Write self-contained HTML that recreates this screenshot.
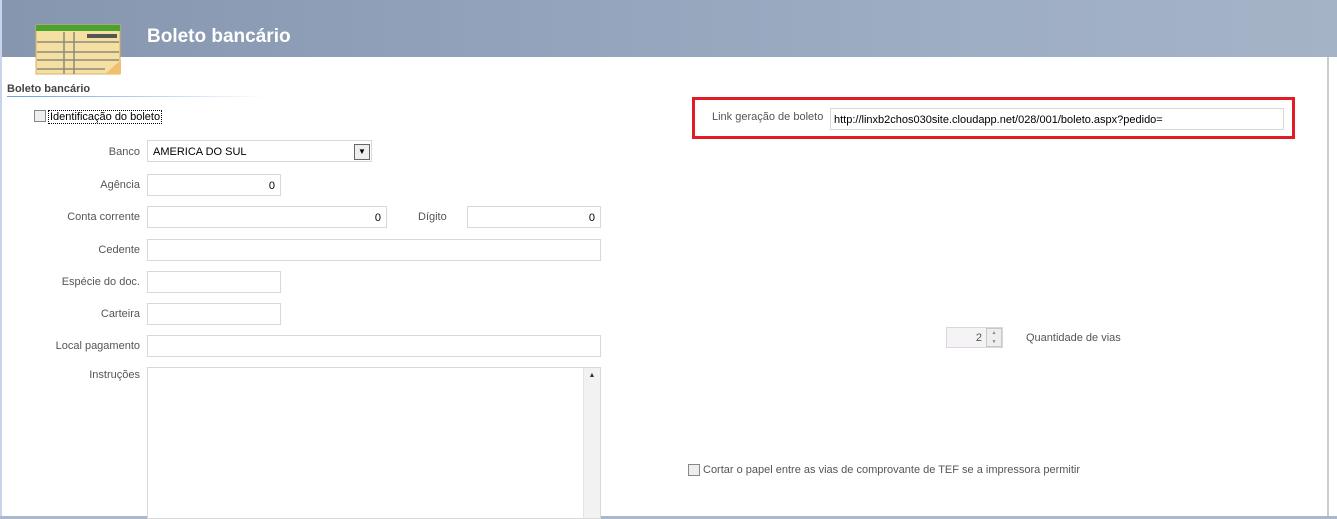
<!DOCTYPE html>
<html><head><meta charset="utf-8"><style>
*{box-sizing:border-box;margin:0;padding:0}
body{width:1337px;height:519px;overflow:hidden;background:#fff;font-family:"Liberation Sans",sans-serif;font-size:11px;color:#555;position:relative}
.hdr{position:absolute;left:0;top:0;width:1337px;height:57px;background:linear-gradient(90deg,#8696ae 0%,#93a3bb 40%,#9dadc3 70%,#a5b3c7 100%)}
.title{position:absolute;left:147px;top:26px;font-size:19px;font-weight:bold;color:#fff}
.a{position:absolute}
.lbl{position:absolute;text-align:right;width:140px;left:0}
.in{position:absolute;border:1px solid #d8d8d8;background:#fff;height:22px;font-size:11px;color:#000;padding:5px 5px 0;text-align:right}
</style></head><body>
<div class="hdr"></div>
<div class="a" style="left:0;top:0;width:2px;height:519px;background:#c8d4ea"></div>
<div class="a" style="left:1327px;top:57px;width:2px;height:462px;background:#c8ccd4"></div>
<div class="a" style="left:0;top:516px;width:1337px;height:3px;background:#a9b8cc"></div>
<svg class="a" style="left:35px;top:22px" width="88" height="56" viewBox="0 0 88 56">
<rect x="1" y="3" width="84" height="49" fill="#f6dfa3" stroke="#d8b060"/>
<rect x="1" y="3" width="84" height="6" fill="#4aa32a"/>
<g stroke="#8a8a7a" stroke-width="1.5"><line x1="2" y1="20" x2="84" y2="20"/><line x1="2" y1="30" x2="84" y2="30"/><line x1="2" y1="38" x2="84" y2="38"/><line x1="2" y1="47" x2="70" y2="47"/><line x1="29" y1="10" x2="29" y2="52"/><line x1="39" y1="10" x2="39" y2="52"/></g>
<rect x="52" y="12" width="30" height="4" fill="#555"/>
<path d="M70 52 L86 38 L86 52 Z" fill="#f0c070"/>
</svg>
<div class="title">Boleto bancário</div>
<div class="a" style="left:7px;top:83px;font-weight:bold;font-size:11px;color:#444">Boleto bancário</div>
<div class="a" style="left:7px;top:96px;width:260px;height:1px;background:linear-gradient(90deg,#6aa0d8,#fff)"></div>
<div class="a" style="left:34px;top:110px;width:12px;height:12px;border:1px solid #888;background:#eee"></div>
<div class="a" style="left:48px;top:110px;border:1px dotted #000;padding:0 1px;color:#000">Identificação do boleto</div>

<div class="lbl" style="top:146px">Banco</div>
<div class="in" style="left:147px;top:140px;width:225px;text-align:left">AMERICA DO SUL</div>
<div class="a" style="left:354px;top:144px;width:16px;height:16px;border:1px solid #666;background:#eee;font-size:8px;text-align:center;line-height:14px;color:#000">▼</div>
<div class="lbl" style="top:179px">Agência</div>
<div class="in" style="left:147px;top:174px;width:134px">0</div>
<div class="lbl" style="top:211px">Conta corrente</div>
<div class="in" style="left:147px;top:206px;width:240px">0</div>
<div class="a" style="left:418px;top:211px">Dígito</div>
<div class="in" style="left:467px;top:206px;width:134px">0</div>
<div class="lbl" style="top:244px">Cedente</div>
<div class="in" style="left:147px;top:239px;width:454px"></div>
<div class="lbl" style="top:276px">Espécie do doc.</div>
<div class="in" style="left:147px;top:271px;width:134px"></div>
<div class="lbl" style="top:308px">Carteira</div>
<div class="in" style="left:147px;top:303px;width:134px"></div>
<div class="lbl" style="top:340px">Local pagamento</div>
<div class="in" style="left:147px;top:335px;width:454px"></div>
<div class="lbl" style="top:369px">Instruções</div>
<div class="in" style="left:147px;top:367px;width:454px;height:152px"></div>
<div class="a" style="left:583px;top:368px;width:17px;height:150px;background:#f2f2f2;border-left:1px solid #e4e4e4;font-size:7px;text-align:center;color:#333;padding-top:4px">▲</div>

<div class="a" style="left:692px;top:97px;width:603px;height:42px;border:3px solid #e21c24"></div>
<div class="a" style="left:712px;top:111px">Link geração de boleto</div>
<div class="in" style="left:830px;top:108px;width:454px;text-align:left;padding-left:3px">http://linxb2chos030site.cloudapp.net/028/001/boleto.aspx?pedido=</div>

<div class="in" style="left:946px;top:327px;width:57px;height:21px;background:#f5f3f5;color:#555;padding-right:20px;padding-top:4px">2</div>
<div class="a" style="left:986px;top:328px;width:16px;height:19px;border:1px solid #c8c8c8;background:#eee;font-size:5px;text-align:center;line-height:9px;color:#888">▲<br>▼</div>
<div class="a" style="left:1026px;top:332px">Quantidade de vias</div>
<div class="a" style="left:688px;top:464px;width:12px;height:12px;border:1px solid #888;background:#eee"></div>
<div class="a" style="left:703px;top:464px">Cortar o papel entre as vias de comprovante de TEF se a impressora permitir</div>
</body></html>
